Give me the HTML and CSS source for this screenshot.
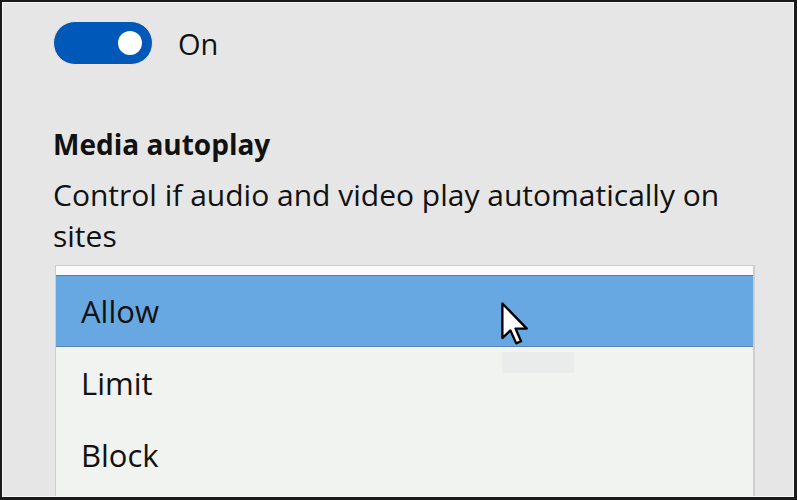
FILE: index.html
```html
<!DOCTYPE html>
<html>
<head>
<meta charset="utf-8">
<link rel="stylesheet" href="styles.css">
</head>
<body>
<div class="frame">
  <div class="panel">
    <div class="toggle-row">
      <div class="toggle"><span class="knob"></span></div>
      <span class="toggle-label">On</span>
    </div>
    <h2 class="title">Media autoplay</h2>
    <p class="desc">Control if audio and video play automatically on sites</p>
    <div class="listbox">
      <div class="option selected">Allow</div>
      <div class="option">Limit</div>
      <div class="option">Block</div>
      <span class="ghost"></span>
      <svg class="cursor" width="30" height="44" viewBox="0 0 13 19">
        <path d="M0.6 0.6 L0.6 15.6 L4.1 12.3 L6.6 17.9 L8.7 17 L6.3 11.5 L11.2 11.5 Z" fill="#fff" stroke="#000" stroke-width="1" stroke-linejoin="round"/>
      </svg>
    </div>
  </div>
</div>
</body>
</html>
```

FILE: styles.css
```css
html, body {
  margin: 0;
  padding: 0;
}
body {
  width: 797px;
  height: 500px;
  overflow: hidden;
  font-family: "Open Sans", "Noto Sans", sans-serif;
  color: #111;
}
.frame {
  box-sizing: border-box;
  width: 797px;
  height: 500px;
  border-style: solid;
  border-color: #1b1b1b;
  border-width: 2px 3px 3px 2px;
}
.panel {
  box-sizing: border-box;
  height: 100%;
  background: #e6e6e6;
  border: 1px solid #f7f7f7;
  padding: 17px 0 0 50px;
  overflow: hidden;
}
.toggle-row {
  display: flex;
  align-items: center;
  gap: 25px;
}
.toggle {
  box-sizing: border-box;
  width: 100px;
  height: 44px;
  border-radius: 22px;
  background: #0058b9;
  border: 1px solid #f3e3d6;
  display: flex;
  align-items: center;
  justify-content: flex-end;
  padding-right: 10px;
}
.knob {
  width: 24px;
  height: 24px;
  border-radius: 50%;
  background: #fff;
}
.toggle-label {
  font-size: 29px;
  line-height: 44px;
  padding-top: 2px;
}
.title {
  margin: 58px 0 0;
  font-size: 28px;
  font-weight: 700;
  line-height: 40px;
}
.desc {
  margin: 10px 0 0;
  font-size: 30px;
  line-height: 41px;
  width: 700px;
}
.listbox {
  position: relative;
  margin: 9px 0 0 2px;
  width: 700px;
  height: 260px;
  box-sizing: border-box;
  border: 1px solid #cdcdcd;
  border-right-width: 2px;
  border-bottom: none;
  background: #f0f3f0;
  padding-top: 9px;
  box-shadow: inset 0 9px 0 #fafafa;
}
.option {
  height: 72px;
  box-sizing: border-box;
  padding-left: 25px;
  font-size: 31px;
  line-height: 72px;
}
.option.selected {
  background: #68a8e2;
  border-top: 1px solid #4f7fb9;
  border-bottom: 1px solid #5b83b3;
  line-height: 70px;
}
.ghost {
  position: absolute;
  left: 446px;
  top: 86px;
  width: 72px;
  height: 21px;
  background: #eaeceb;
}
.cursor {
  position: absolute;
  left: 445px;
  top: 36px;
}
```
